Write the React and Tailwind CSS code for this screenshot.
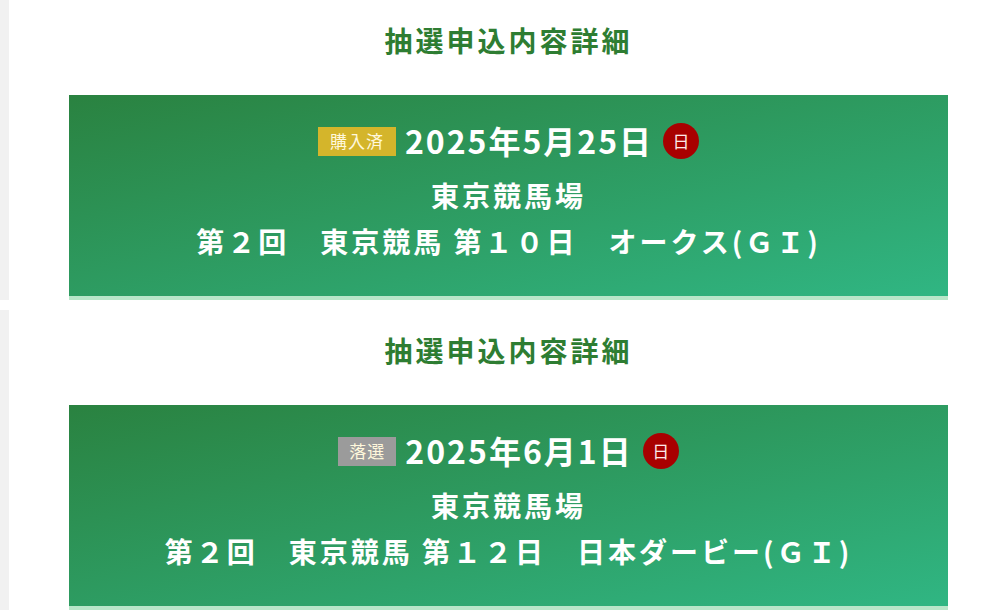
import React from "react";

const entries = [
  {
    status: "購入済",
    statusClass: "bg-[#d4b52b] w-[78px]",
    date: "2025年5月25日",
    venue: "東京競馬場",
    race: "第２回　東京競馬 第１０日　オークス(ＧＩ)",
  },
  {
    status: "落選",
    statusClass: "bg-[#9b9b9b] w-[58px]",
    date: "2025年6月1日",
    venue: "東京競馬場",
    race: "第２回　東京競馬 第１２日　日本ダービー(ＧＩ)",
  },
];

const Entry = ({ item }) => {
  return (
    <section className="border-l-[9px] border-[#f1f1f1] bg-white pl-[60px] pt-5 mb-[10px]">
      <h2 className="w-[879px] text-center text-[28px] leading-[40px] font-bold tracking-[3px] text-[#2e7d32]">
        抽選申込内容詳細
      </h2>
      <div className="mt-[35px] w-[879px] bg-linear-to-br from-[#2a8240] to-[#30b683] border-b-4 border-[#b8e6c9] pt-[26px] pb-[32px] text-white">
        <div className="flex items-center justify-center h-[40px]">
          <span
            className={`${item.statusClass} h-[29px] flex items-center justify-center text-[17px] text-[#fff8dc] tracking-[1px]`}
          >
            {item.status}
          </span>
          <span className="ml-[9px] text-[32px] leading-[40px] font-bold tracking-[2px] -mt-[3px]">
            {item.date}
          </span>
          <span className="ml-[10px] w-[36px] h-[36px] rounded-full bg-[#a80000] flex items-center justify-center text-[17px] text-[#fde8e8]">
            日
          </span>
        </div>
        <div className="mt-[11px] text-center text-[28px] leading-[46px] font-bold tracking-[3px]">
          {item.venue}
        </div>
        <div className="text-center text-[28px] leading-[46px] font-bold tracking-[3px] whitespace-pre">
          {item.race}
        </div>
      </div>
    </section>
  );
};

export default function App() {
  return (
    <div className="min-h-[610px] bg-white font-['Noto_Sans_CJK_JP','Noto_Sans',sans-serif] overflow-hidden">
      {entries.map((item) => (
        <Entry key={item.date} item={item} />
      ))}
    </div>
  );
}
